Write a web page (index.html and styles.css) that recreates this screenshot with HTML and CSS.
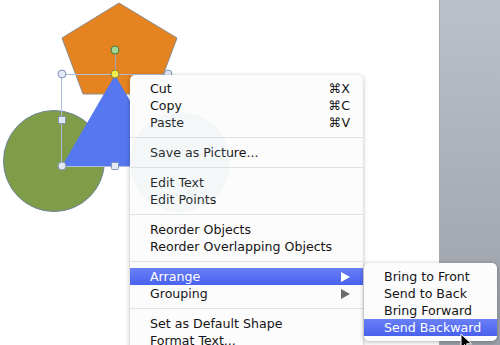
FILE: index.html
```html
<!DOCTYPE html>
<html lang="en">
<head>
    <meta charset="UTF-8">
    <title>Arrange menu</title>
    <link rel="stylesheet" href="styles.css">
</head>
<body>

    <div class="screen">
        <!-- Slide area with the shapes -->
        <div class="slide">
            <svg class="canvas" width="440" height="345" viewBox="0 0 440 345">
                <polygon points="119,3 177,38 156,94 83,94 62,38" fill="#e4831f" stroke="#8c8c8c" stroke-width="1"/>
                <circle cx="54" cy="161" r="50.5" fill="#7f9c49" stroke="#71849a" stroke-width="1"/>
                <polygon points="115,75 168,166 62,166" fill="#5577f0"/>

                <!-- selection box -->
                <rect x="61.5" y="74.5" width="107" height="92" fill="none" stroke="#adbddb" stroke-width="1"/>
                <line x1="115.5" y1="50" x2="115.5" y2="74" stroke="#a0a8b8" stroke-width="1"/>

                <circle cx="62" cy="74" r="4" fill="#e3e9f4" stroke="#8093b8"/>
                <circle cx="168" cy="74" r="4" fill="#e3e9f4" stroke="#8093b8"/>
                <circle cx="62" cy="166" r="4" fill="#e3e9f4" stroke="#8093b8"/>
                <rect x="58.5" y="116.5" width="7" height="7" rx="1" fill="#e3e9f4" stroke="#8093b8"/>
                <rect x="111.5" y="162.5" width="7" height="7" rx="1" fill="#e3e9f4" stroke="#8093b8"/>
                <circle cx="115" cy="50" r="4" fill="#a4d68f" stroke="#4f7a45"/>
                <circle cx="115" cy="74" r="4" fill="#f1ea4a" stroke="#8a8740"/>
            </svg>
        </div>

        <div class="sidebar"></div>

        <!-- Context menu -->
        <div class="menu">
            <div class="item"><span>Cut</span><span class="key">&#8984;X</span></div>
            <div class="item"><span>Copy</span><span class="key">&#8984;C</span></div>
            <div class="item"><span>Paste</span><span class="key">&#8984;V</span></div>
            <div class="sep"></div>
            <div class="item"><span>Save as Picture...</span></div>
            <div class="sep"></div>
            <div class="item"><span>Edit Text</span></div>
            <div class="item"><span>Edit Points</span></div>
            <div class="sep"></div>
            <div class="item"><span>Reorder Objects</span></div>
            <div class="item"><span>Reorder Overlapping Objects</span></div>
            <div class="sep"></div>
            <div class="item active"><span>Arrange</span><span class="arrow"></span></div>
            <div class="item"><span>Grouping</span><span class="arrow"></span></div>
            <div class="sep"></div>
            <div class="item"><span>Set as Default Shape</span></div>
            <div class="item"><span>Format Text...</span></div>
        </div>

        <div class="ghost"></div>

        <!-- Submenu Arrange -->
        <div class="submenu">
            <div class="item"><span>Bring to Front</span></div>
            <div class="item"><span>Send to Back</span></div>
            <div class="item"><span>Bring Forward</span></div>
            <div class="item active"><span>Send Backward</span></div>
        </div>

        <svg class="cursor" width="14" height="20" viewBox="0 0 14 20">
            <path d="M1,1 L1,15 L4.5,11.5 L7,17.5 L9,16.6 L6.6,10.8 L11.5,10.8 Z" fill="#000" stroke="#fff" stroke-width="1"/>
        </svg>
    </div>

</body>
</html>
```

FILE: styles.css
```css
/* Estilo general */
body {
    margin: 0;
    padding: 0;
    font-family: "DejaVu Sans", sans-serif;
    font-size: 12.6px;
    color: #141414;
}

.screen {
    position: relative;
    display: flex;
    width: 500px;
    height: 345px;
    overflow: hidden;
}

.slide {
    position: relative;
    flex: 1;
    background-color: #fff;
}

.canvas {
    position: absolute;
    top: 0;
    left: 0;
}

.sidebar {
    width: 60px;
    background: linear-gradient(#bcc0c8, #9ba0a9);
    border-left: 1px solid #a4a8b0;
}

/* Menu contextual */
.menu {
    position: absolute;
    top: 75px;
    left: 130px;
    width: 233px;
    padding-top: 5px;
    background-color: #fcfcfc;
    border-radius: 5px 5px 0 0;
    box-shadow: 0 1px 5px rgba(0, 0, 0, 0.28);
}

.item {
    display: flex;
    align-items: center;
    justify-content: space-between;
    height: 17px;
    padding: 0 13px 0 20px;
    white-space: nowrap;
}

.item.active {
    background: linear-gradient(#6a7ff7, #4862ee);
    color: #fff;
}

.arrow {
    width: 0;
    height: 0;
    border-top: 5px solid transparent;
    border-bottom: 5px solid transparent;
    border-left: 9px solid #6c6c6c;
}

.item.active .arrow {
    border-left-color: #fff;
}

.sep {
    height: 1px;
    margin: 6px 0;
    background-color: #e2e2e2;
}

.ghost {
    position: absolute;
    top: 112px;
    left: 130px;
    width: 100px;
    height: 100px;
    border-radius: 50%;
    background-color: rgba(190, 210, 220, 0.12);
}

/* Submenu */
.submenu {
    position: absolute;
    top: 263px;
    left: 364px;
    width: 133px;
    padding: 5px 0;
    background-color: #fcfcfc;
    border-radius: 5px;
    box-shadow: 0 1px 5px rgba(0, 0, 0, 0.3);
}

.submenu .item {
    padding-left: 20px;
}

.cursor {
    position: absolute;
    top: 333px;
    left: 460px;
}
```
